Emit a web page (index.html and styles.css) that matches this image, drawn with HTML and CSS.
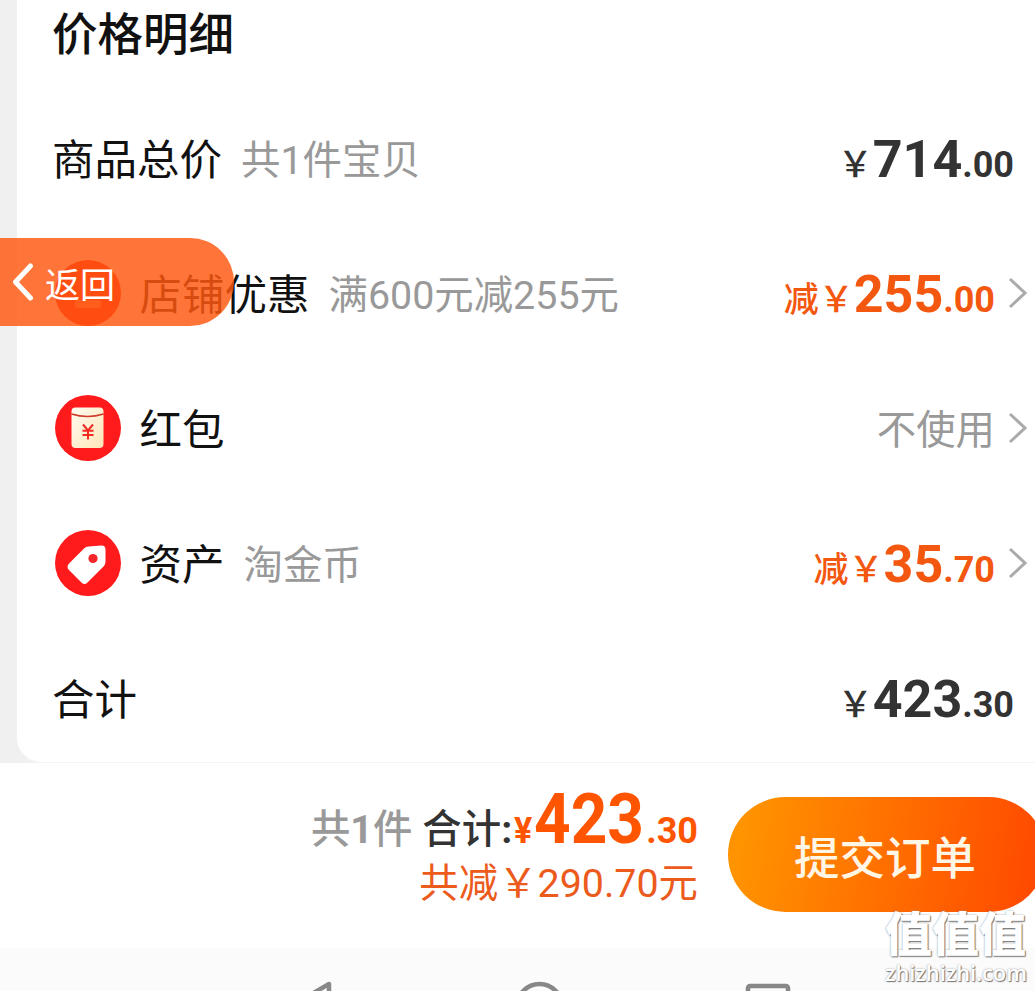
FILE: index.html
```html
<!DOCTYPE html>
<html lang="zh-CN">
<head>
<meta charset="utf-8">
<title>价格明细</title>
<link rel="stylesheet" href="styles.css">
</head>
<body>
<div class="screen">
  <main class="backdrop">
    <section class="card">
      <h1 class="title">价格明细</h1>
      <div class="row">
        <span class="label">商品总价</span><span class="note">共1件宝贝</span>
        <span class="price dark"><span class="yen">￥</span><span class="int">714</span><span class="dec">.00</span></span>
      </div>
      <div class="row linked">
        <svg class="icon" viewBox="0 0 66 66"><circle cx="33" cy="33" r="33" fill="#ff1a1c"/><rect x="20" y="40" width="26" height="8" rx="3" fill="#ff7a5a"/></svg>
        <span class="label">店铺优惠</span><span class="note">满600元减255元</span>
        <span class="price"><span class="yen">减￥</span><span class="int">255</span><span class="dec">.00</span></span>
        <svg class="chevron" viewBox="0 0 20 32"><path d="M2 2 17 16 2 30"/></svg>
      </div>
      <div class="row linked">
        <svg class="icon" viewBox="0 0 66 66">
          <defs><linearGradient id="cream" x1="0" y1="0" x2="1" y2="1"><stop offset="0" stop-color="#fffaf0"/><stop offset="1" stop-color="#ffe6b8"/></linearGradient></defs>
          <circle cx="33" cy="33" r="33" fill="#ff1a1c"/>
          <rect x="16.500" y="12.500" width="32" height="40.500" rx="4" fill="url(#cream)"/>
          <path d="M16.500 19Q32.500 24 48.500 19" fill="none" stroke="#cf3a2c" stroke-width="1.500"/>
          <path d="M28 29.500 33 35.500 38 29.500M33 35.500V44.500M27.500 35.800H38.500M27.500 40H38.500" fill="none" stroke="#ef2b22" stroke-width="2"/>
        </svg>
        <span class="label">红包</span>
        <span class="note end">不使用</span>
        <svg class="chevron" viewBox="0 0 20 32"><path d="M2 2 17 16 2 30"/></svg>
      </div>
      <div class="row linked">
        <svg class="icon" viewBox="0 0 66 66">
          <circle cx="33" cy="33" r="33" fill="#ff1a1c"/>
          <path d="M33.500 16.500 46.500 15.500Q50.500 15.500 50.500 19.500V31.500Q50.500 34 49 36L32.500 52.500Q29.500 55.500 26.500 52.500L14 40Q11 37 14 33.500L29 18.500Q31 16.500 33.500 16.500Z" fill="#fff"/>
          <circle cx="38" cy="28.500" r="4.600" fill="#f3262a"/>
        </svg>
        <span class="label">资产</span><span class="note">淘金币</span>
        <span class="price"><span class="yen">减￥</span><span class="int">35</span><span class="dec">.70</span></span>
        <svg class="chevron" viewBox="0 0 20 32"><path d="M2 2 17 16 2 30"/></svg>
      </div>
      <div class="row">
        <span class="label">合计</span>
        <span class="price dark"><span class="yen">￥</span><span class="int">423</span><span class="dec">.30</span></span>
      </div>
    </section>
  </main>
  <footer class="checkout">
    <div class="summary">
      <div class="total"><span class="count">共<b>1</b>件</span><span class="sum">合计<b>:</b></span><span class="sum-yen">¥</span><span class="sum-int">423</span><span class="dec">.30</span></div>
      <div class="saved">共减￥290.70元</div>
    </div>
    <button class="submit">提交订单</button>
  </footer>
  <nav class="sysbar">
    <svg class="nav-icon" viewBox="0 0 50 50"><path d="M44 3V47L6 25Z"/></svg>
    <svg class="nav-icon" viewBox="0 0 50 50"><circle cx="25.500" cy="25.500" r="22.500"/></svg>
    <svg class="nav-icon" viewBox="0 0 50 50"><rect x="5" y="5" width="40" height="40" rx="2"/></svg>
  </nav>
  <a class="back">
    <svg class="back-arrow" viewBox="0 0 22 38"><path d="M18.500 3 3.500 19 18.500 35"/></svg>
    <span>返回</span>
  </a>
  <div class="watermark"><span class="wm-name">值值值</span><span class="wm-site">zhizhizhi.com</span></div>
</div>
</body>
</html>
```
FILE: styles.css
```css
* { box-sizing: border-box; }
body {
  margin: 0;
  font-family: Roboto, "Noto Sans CJK SC", sans-serif;
  color: #111;
  background: #fff;
}
.screen {
  position: relative;
  width: 1035px;
  height: 991px;
  overflow: hidden;
  display: flex;
  flex-direction: column;
}
.backdrop {
  flex: none;
  height: 763px;
  padding-left: 17px;
  background: #f0f0f0;
}
.card {
  height: 764px;
  padding-left: 35px;
  background: #fff;
  border-bottom: 2px solid #f5f5f5;
  border-bottom-left-radius: 26px;
}
.title {
  margin: 0;
  height: 93px;
  font-size: 45.500px;
  font-weight: 500;
  line-height: 72px;
}
.row {
  display: flex;
  align-items: center;
  height: 135px;
  padding-right: 21px;
  white-space: nowrap;
}
.row.linked { padding-right: 7px; }
.icon { width: 66px; height: 66px; margin: -6px 19px 0 2.500px; flex: none; }
.label { font-size: 42.500px; line-height: 60px; }
.note { margin-left: 19px; font-size: 39.400px; line-height: 60px; color: #999; }
.note.end { margin-left: auto; }
.price { margin-left: auto; padding-top: 10px; line-height: 60px; color: #f4570f; }
.price.dark { color: #333; }
.yen { font-size: 35px; font-weight: 500; }
.int { font-size: 52px; font-weight: 700; }
.dec { font-size: 36px; font-weight: 700; }
.chevron { width: 20px; height: 32px; margin: -5px 0 0 13px; flex: none; }
.chevron path { fill: none; stroke: #aaa; stroke-width: 3; }
.checkout {
  flex: none;
  display: flex;
  justify-content: flex-end;
  height: 185px;
  background: #fff;
}
.summary {
  padding-top: 16px;
  margin-right: 30px;
  text-align: right;
  white-space: nowrap;
  color: #ff5500;
}
.total { height: 80px; line-height: 80px; }
.count { font-size: 39.400px; font-weight: 500; color: #999; }
.sum { margin-left: 10px; font-size: 39.400px; font-weight: 500; color: #333; }
.sum-yen { display: inline-block; width: 22px; font-size: 37px; font-weight: 700; transform: scaleX(.92); transform-origin: left; }
.sum-int { display: inline-block; width: 112px; font-size: 71px; font-weight: 700; transform: scaleX(.9); transform-origin: left; text-align: left; }
.saved { font-size: 39.400px; line-height: 50px; color: #ec5a1c; }
.submit {
  width: 318px;
  height: 115px;
  margin: 34px -11px 0 0;
  padding: 0 4px 0 0;
  border: 0;
  border-radius: 58px;
  background: linear-gradient(100deg, #ff9400 5%, #ff4a00 95%);
  color: #fff6e6;
  font-family: inherit;
  font-size: 45.500px;
  font-weight: 500;
}
.sysbar {
  flex: 1;
  min-height: 0;
  display: flex;
  justify-content: space-between;
  padding: 33px 242px 0 285px;
  background: #fbfbfb;
}
.nav-icon { width: 50px; height: 50px; flex: none; }
.nav-icon * { fill: none; stroke: #888; stroke-width: 4.500; stroke-linejoin: round; }
.back {
  position: absolute;
  left: 0;
  top: 238px;
  width: 234px;
  height: 88px;
  display: flex;
  align-items: center;
  padding: 0 0 0 12px;
  border-radius: 0 44px 44px 0;
  background: rgba(255, 88, 16, .83);
  color: #fff;
  font-size: 35px;
}
.back-arrow { width: 22px; height: 38px; margin-right: 11px; }
.back-arrow path { fill: none; stroke: #fff; stroke-width: 5; stroke-linecap: round; stroke-linejoin: round; }
.watermark {
  position: absolute;
  left: 885px;
  top: 910px;
  display: flex;
  flex-direction: column;
  color: #fff;
  text-shadow: 1px 1px 1px #777, 0 0 2px #999;
}
.wm-name { font-size: 47px; line-height: 50px; font-weight: 900; }
.wm-site { font-family: "Open Sans", sans-serif; font-size: 21.800px; line-height: 25px; font-weight: 600; }
```
